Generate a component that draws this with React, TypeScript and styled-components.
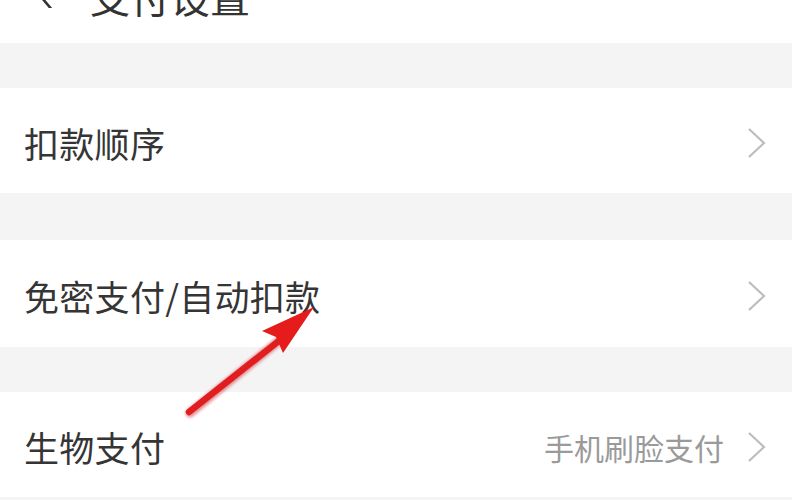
import React from "react";
import styled, { createGlobalStyle } from "styled-components";

const Global = createGlobalStyle`
  html, body { margin: 0; padding: 0; background: #ffffff; }
  body { font-family: "Noto Sans CJK SC", "Noto Sans", sans-serif; }
`;

const Page = styled.div`
  position: relative;
  width: 800px;
  height: 500px;
  overflow: hidden;
  background: #ffffff;
  display: flex;
  flex-direction: column;
`;

const Header = styled.div`
  height: 43px;
  flex: none;
  display: flex;
  align-items: flex-end;
  overflow: hidden;
`;

const BackIcon = styled.svg`
  width: 30px;
  height: 40px;
  margin: 0 0 35px 30px;
  flex: none;
`;

const Title = styled.span`
  font-size: 40px;
  line-height: 40px;
  color: #333;
  margin: 0 0 27px 30px;
`;

const Gap = styled.div<{ $h: number }>`
  height: ${(p) => p.$h}px;
  flex: none;
  background: #f4f4f4;
  margin-right: 8px;
`;

const Row = styled.div<{ $h: number }>`
  height: ${(p) => p.$h}px;
  flex: none;
  display: flex;
  align-items: center;
  padding: 4px 0 0 24px;
  box-sizing: border-box;
`;

const Label = styled.span`
  flex: 1;
  font-size: 35px;
  color: #353535;
  letter-spacing: 0.3px;
`;

const Value = styled.span`
  font-size: 30px;
  color: #9a9a9a;
  margin-right: 22px;
`;

const Chevron = styled.svg`
  width: 22px;
  height: 32px;
  margin-right: 32px;
  flex: none;
`;

const Arrow = styled.svg`
  position: absolute;
  left: 0;
  top: 0;
  pointer-events: none;
`;

const ChevronIcon = () => (
  <Chevron viewBox="0 0 22 32">
    <path d="M3 2 L18 16 L3 30" fill="none" stroke="#bdbdbd" strokeWidth="2.2" />
  </Chevron>
);

export default function App() {
  return (
    <Page>
      <Global />
      <Header>
        <BackIcon viewBox="0 0 30 40">
          <path d="M23 4 L7 24 L23 43" fill="none" stroke="#333" strokeWidth="2.6" />
        </BackIcon>
        <Title>支付设置</Title>
      </Header>
      <Gap $h={45} />
      <Row $h={105}>
        <Label>扣款顺序</Label>
        <ChevronIcon />
      </Row>
      <Gap $h={47} />
      <Row $h={107}>
        <Label>免密支付/自动扣款</Label>
        <ChevronIcon />
      </Row>
      <Gap $h={45} />
      <Row $h={105}>
        <Label>生物支付</Label>
        <Value>手机刷脸支付</Value>
        <ChevronIcon />
      </Row>
      <Gap $h={5} />
      <Arrow width="800" height="500" viewBox="0 0 800 500">
        <defs>
          <filter id="glow" x="-20%" y="-20%" width="140%" height="140%">
            <feGaussianBlur stdDeviation="1.5" />
          </filter>
        </defs>
        <g filter="url(#glow)" opacity="0.5">
          <line x1="190" y1="413" x2="285" y2="336" stroke="#c23" strokeWidth="9" strokeLinecap="round" />
        </g>
        <line x1="189" y1="412" x2="285" y2="336" stroke="#e01e1e" strokeWidth="6.5" strokeLinecap="round" />
        <polygon points="314,307 262,331 276,337 283,353" fill="#e61c1c" />
      </Arrow>
    </Page>
  );
}
